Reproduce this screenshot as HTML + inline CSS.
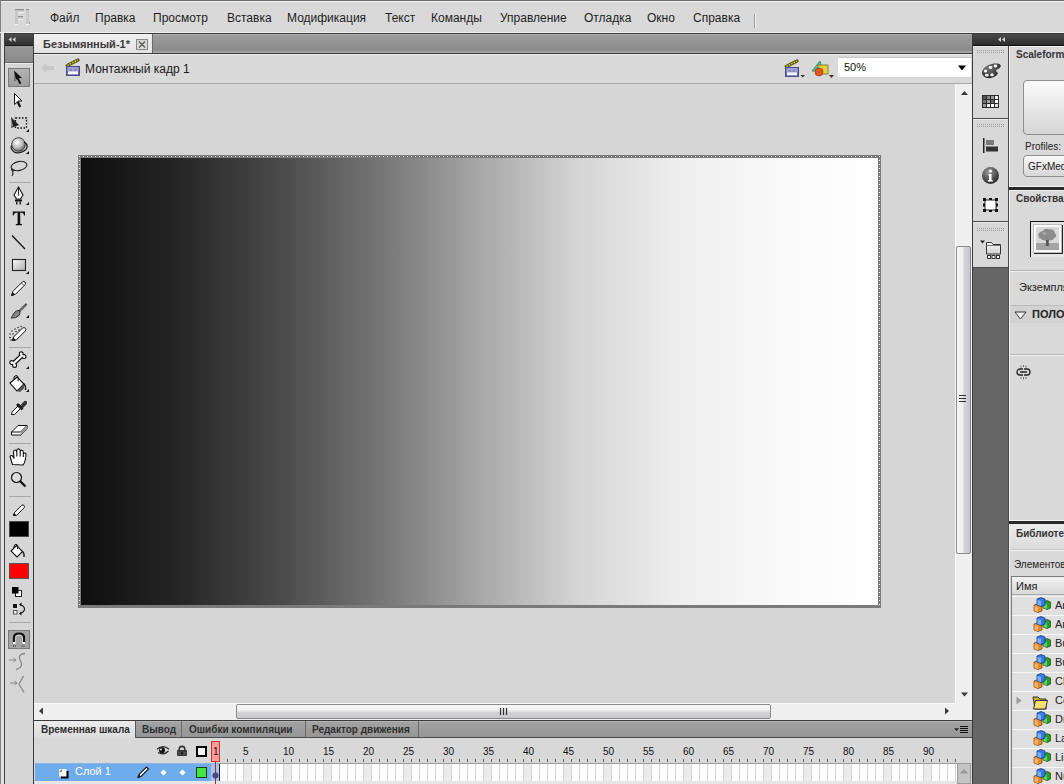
<!DOCTYPE html>
<html><head><meta charset="utf-8">
<style>
*{box-sizing:border-box;margin:0;padding:0}
html,body{width:1064px;height:784px;overflow:hidden;background:#d8d8d8}
body{position:relative;font-family:"Liberation Sans",sans-serif;color:#222}
.a{position:absolute}
.t{position:absolute;white-space:nowrap;line-height:1}
.menu{font-size:12px;color:#1e1e1e;top:12px}
</style></head><body>
<!-- frame -->
<div class="a" style="left:0;top:0;width:1064px;height:1px;background:#6e6e6e"></div>
<div class="a" style="left:0;top:1px;width:1064px;height:1px;background:#f4f4f4"></div>
<div class="a" style="left:0;top:0;width:1px;height:784px;background:#808080"></div>
<!-- menubar -->
<div class="a" style="left:1px;top:2px;width:1063px;height:30px;background:#d9d9d9"></div>
<div class="a" style="left:0;top:32px;width:1064px;height:1px;background:#f0f0f0"></div>
<div id="menus">
<div class="t menu" style="left:50px">Файл</div>
<div class="t menu" style="left:95px">Правка</div>
<div class="t menu" style="left:153px">Просмотр</div>
<div class="t menu" style="left:227px">Вставка</div>
<div class="t menu" style="left:287px">Модификация</div>
<div class="t menu" style="left:385px">Текст</div>
<div class="t menu" style="left:431px">Команды</div>
<div class="t menu" style="left:500px">Управление</div>
<div class="t menu" style="left:584px">Отладка</div>
<div class="t menu" style="left:647px">Окно</div>
<div class="t menu" style="left:693px">Справка</div>
</div>
<div class="a" style="left:754px;top:14px;width:1px;height:14px;background:#9a9a9a"></div>
<div class="a" style="left:755px;top:14px;width:1px;height:14px;background:#f4f4f4"></div>

<!-- top dark line -->
<div class="a" style="left:4px;top:33px;width:1060px;height:1px;background:#3a3a3a"></div>

<!-- ===== LEFT TOOLBAR ===== -->
<div class="a" style="left:1px;top:33px;width:3px;height:751px;background:#e2e2e2"></div>
<div class="a" style="left:4px;top:33px;width:1px;height:751px;background:#3c3c3c"></div>
<div class="a" style="left:5px;top:34px;width:28px;height:12px;background:linear-gradient(#4c4c4c,#2e2e2e)"></div>
<div class="a" style="left:5px;top:45px;width:28px;height:1px;background:#1a1a1a"></div>
<div class="a" style="left:5px;top:46px;width:28px;height:17px;background:linear-gradient(#999,#8a8a8a);border-bottom:1px solid #6a6a6a"></div>
<div class="a" style="left:5px;top:63px;width:28px;height:721px;background:#d6d6d6;border-top:1px solid #ececec"></div>
<div class="a" style="left:33px;top:33px;width:1px;height:751px;background:#3c3c3c"></div>


<!-- ===== TOOL ICONS ===== -->
<svg class="a" style="left:0;top:0" width="34" height="784">
<defs>
<linearGradient id="selbtn" x1="0" x2="0" y1="0" y2="1"><stop offset="0" stop-color="#b4b4b4"/><stop offset="1" stop-color="#9c9c9c"/></linearGradient>
<radialGradient id="sph" cx="0.4" cy="0.35" r="0.65"><stop offset="0" stop-color="#fff"/><stop offset="0.6" stop-color="#bbb"/><stop offset="1" stop-color="#666"/></radialGradient>
<linearGradient id="rectg" x1="0" x2="1" y1="0" y2="1"><stop offset="0" stop-color="#fff"/><stop offset="1" stop-color="#aaa"/></linearGradient>
</defs>
<!-- dotted header ◂◂ -->
<path d="M11.5 37L8.5 39.5L11.5 42Z M15.5 37L12.5 39.5L15.5 42Z" fill="#d0d0d0"/>
<!-- selected button -->
<rect x="8.5" y="68.5" width="21" height="18" fill="url(#selbtn)" stroke="#7a7a7a"/>
<path d="M14 70.5L22 78L18.8 78.2L21.3 83.3L19.5 84.2L17 79L14.2 81.5Z" fill="#111"/>
<path d="M14 70.5L14.2 81.5L16 79.8Z" fill="#888"/>
<!-- subselection -->
<path d="M14.5 93.5L22 101H18.5L14.6 104.5Z" fill="#fff" stroke="#111" stroke-width="1"/>
<path d="M17.6 101.5L20.2 107" stroke="#111" stroke-width="2.2"/>
<!-- free transform -->
<path d="M11 117L19 125L11 128Z" fill="#222"/><path d="M11 117L11 128L13 126Z" fill="#888"/>
<rect x="15.5" y="118" width="11" height="10" fill="none" stroke="#111" stroke-width="1.3" stroke-dasharray="1.6 1.6"/>
<path d="M29 129V132H26Z" fill="#111"/>
<!-- 3d rotation -->
<circle cx="18.5" cy="144.5" r="6.8" fill="url(#sph)" stroke="#333" stroke-width="0.9"/>
<path d="M11.5 145.5C10 148.5 13 152.5 17 152.8C21.5 153.2 27 150 27.2 146.5C27.4 144 25 142.5 24 142" fill="none" stroke="#222" stroke-width="1.3"/>
<path d="M29 151V154H26Z" fill="#111"/>
<!-- lasso -->
<ellipse cx="19" cy="166" rx="8" ry="4.5" fill="none" stroke="#222" stroke-width="1.1" transform="rotate(-12 19 166)"/>
<path d="M12 168C10.5 170 13 172 14 170.5C14.8 169 12 171 13 173.5L12 176" fill="none" stroke="#222" stroke-width="1.1"/>
<!-- sep -->
<rect x="9" y="182" width="22" height="1" fill="#a8a8a8"/>
<!-- pen -->
<path d="M18.5 187L23 195L20.5 199H16.5L14 195Z" fill="#fff" stroke="#111" stroke-width="1.1"/>
<path d="M18.5 188V194" stroke="#111" stroke-width="0.9"/><circle cx="18.5" cy="195" r="0.8" fill="#111"/>
<rect x="15" y="199.5" width="7" height="2" fill="#111"/><rect x="16" y="201.5" width="1.5" height="3" fill="#222"/><rect x="19.5" y="201.5" width="1.5" height="3" fill="#222"/>
<path d="M29 202V205H26Z" fill="#111"/>
<!-- T -->
<path d="M12.8 211.5H25V215.5H24.2Q23.8 213 21.5 212.8H20.2V223.8L22 224.3V225.3H15.8V224.3L17.6 223.8V212.8H16.3Q14 213 13.6 215.5H12.8Z" fill="#111"/>
<!-- line -->
<path d="M12 235.5L25 249" stroke="#111" stroke-width="1.3"/>
<!-- rect -->
<rect x="12.5" y="259.5" width="13" height="11" fill="url(#rectg)" stroke="#222" stroke-width="1.1"/>
<path d="M29 271V274H26Z" fill="#111"/>
<!-- pencil -->
<path d="M11.5 295.5L12.8 291.5L22.5 281.8Q24 281 25 282Q26 283.3 25.2 284.5L15.5 294.2Z" fill="#fff" stroke="#111" stroke-width="1"/>
<path d="M11.2 296L12.5 292L15.2 294.7Z" fill="#111"/>
<path d="M21.5 283L24 285.5" stroke="#111" stroke-width="0.8"/>
<!-- brush -->
<path d="M26.5 304L19 311.5" stroke="#222" stroke-width="2"/>
<path d="M26 304.5L19.5 311" stroke="#fff" stroke-width="0.6"/>
<path d="M19.5 310.5Q16 310 14 313Q12.5 316 11 318Q16 318.5 18.5 316Q21 313.5 19.5 310.5Z" fill="#888" stroke="#222" stroke-width="0.9"/>
<path d="M29 315V318H26Z" fill="#111"/>
<!-- deco -->
<path d="M12.5 340.5L13.5 337L22.5 328Q24 327 25.5 328.3Q26.5 329.8 25.3 331L16.3 340Z" fill="#fff" stroke="#111" stroke-width="1"/>
<path d="M12.2 341L13.3 337.5L15.8 340Z" fill="#111"/>
<g fill="#333"><circle cx="10" cy="334" r="0.8"/><circle cx="12" cy="331" r="0.8"/><circle cx="15" cy="329" r="0.8"/><circle cx="18" cy="327.5" r="0.8"/><circle cx="21" cy="326.5" r="0.8"/><circle cx="10" cy="337.5" r="0.8"/><circle cx="13" cy="334" r="0.8"/><circle cx="16" cy="331.5" r="0.8"/><circle cx="19" cy="330" r="0.8"/><circle cx="11" cy="340" r="0.8"/></g>
<!-- sep -->
<rect x="9" y="347" width="22" height="1" fill="#a8a8a8"/>
<!-- bone -->
<g fill="#111"><path d="M13 364L22.5 355" stroke="#111" stroke-width="4.6"/><circle cx="11.8" cy="362.6" r="2.5"/><circle cx="14.6" cy="365.4" r="2.5"/><circle cx="21.2" cy="353.8" r="2.5"/><circle cx="24" cy="356.6" r="2.5"/></g>
<g fill="#fff"><path d="M13 364L22.5 355" stroke="#fff" stroke-width="2.4"/><circle cx="11.8" cy="362.6" r="1.4"/><circle cx="14.6" cy="365.4" r="1.4"/><circle cx="21.2" cy="353.8" r="1.4"/><circle cx="24" cy="356.6" r="1.4"/></g>
<path d="M29 366V369H26Z" fill="#111"/>
<!-- bucket -->
<path d="M10 383L17 377L24 384L17 391Z" fill="#fff" stroke="#111" stroke-width="1.1"/>
<path d="M17 391L24 384V388.5L20 392Z" fill="#555"/>
<path d="M14 380Q13 376 16 375.5Q19 375.5 18 381" fill="none" stroke="#111" stroke-width="1"/>
<path d="M24 384Q26 386 25.5 390" stroke="#111" stroke-width="1.3" fill="none"/>
<path d="M29 389V392H26Z" fill="#111"/>
<!-- eyedropper -->
<path d="M11.5 414.5L12 412L19.5 404.5L22 407L14.5 414.5Z" fill="#fff" stroke="#111" stroke-width="1"/>
<path d="M18 403L23.5 408.5L21.5 410.5L16 405Z" fill="#222"/>
<path d="M21 404.5L24.5 401Q26.5 400 27 402Q27.5 404 25.5 405.5L22.5 408.5Z" fill="#333"/>
<!-- eraser -->
<path d="M11.5 432L18 425.5H27L27 428.5L21 435H11.5Z" fill="#fff" stroke="#111" stroke-width="1"/>
<path d="M11.5 432H20.5L27 425.5" fill="none" stroke="#111" stroke-width="1"/>
<path d="M20.5 432L21 435L27 428.5V425.5Z" fill="#999"/>
<!-- sep -->
<rect x="9" y="443" width="22" height="1" fill="#a8a8a8"/>
<!-- hand -->
<path d="M12.5 464.5L10.5 458Q9.5 455.5 11.5 455.5Q13 455.5 14 458.5L13.5 452Q13.5 450 15 450Q16.5 450 16.8 452V456.5V450.5Q17 448.8 18.5 448.8Q20 449 20.2 450.8V456.5V451.5Q20.5 450 22 450.2Q23.3 450.5 23.3 452V457V454Q23.8 452.8 25 453Q26.3 453.5 26 455.5L25 461Q24.5 463.5 23 465Z" fill="#fff" stroke="#111" stroke-width="1.1"/>
<!-- zoom -->
<circle cx="16.5" cy="477.5" r="5" fill="#ddd" stroke="#111" stroke-width="1.2"/>
<path d="M20 481L25.5 486.5" stroke="#111" stroke-width="2.4"/>
<!-- sep -->
<rect x="9" y="496" width="22" height="1" fill="#a8a8a8"/>
<!-- stroke pencil -->
<path d="M13.5 515.5L14.3 512.8L21.8 505.3Q23 504.5 24 505.5Q25 506.5 24.2 507.7L16.7 515.2Z" fill="#fff" stroke="#111" stroke-width="1"/>
<path d="M13.2 516L14.2 513L16.2 515Z" fill="#111"/>
<!-- black swatch -->
<rect x="9.5" y="521.5" width="19" height="15" fill="#000" stroke="#444"/>
<!-- fill bucket -->
<path d="M11 551L16.5 545.5L22.5 551.5L17 557Z" fill="#fff" stroke="#111" stroke-width="1.1"/>
<path d="M14 548Q13.5 544.5 16 544.3Q18.5 544.5 17.5 549" fill="none" stroke="#111" stroke-width="1"/>
<path d="M22.5 551.5Q24.5 553 24 557" stroke="#111" stroke-width="1.3" fill="none"/>
<!-- red swatch -->
<rect x="9.5" y="563.5" width="19" height="15" fill="#f00" stroke="#555"/>
<!-- default colors -->
<rect x="15.5" y="590.5" width="6" height="6" fill="#fff" stroke="#222"/>
<rect x="12" y="587" width="6.5" height="6.5" fill="#000"/>
<!-- swap -->
<rect x="13" y="604" width="4" height="4" fill="#111"/>
<rect x="13.5" y="610.5" width="3.5" height="3.5" fill="#fff" stroke="#333" stroke-width="0.8"/>
<path d="M20 604.5Q24.5 606 24.5 609Q24.5 612 20 613.5" fill="none" stroke="#111" stroke-width="1.1"/>
<path d="M19 604.5L21.5 602.5V606.5Z M19 613.5L21.5 611.5V615.5Z" fill="#111"/>
<!-- sep -->
<rect x="9" y="622" width="22" height="1" fill="#a8a8a8"/>
<!-- magnet (pressed) -->
<rect x="8.5" y="630.5" width="21" height="18" fill="#a4a4a4" stroke="#7a7a7a"/>
<path d="M14 643V637.5Q14 633.5 19 633.5Q24 633.5 24 637.5V643" fill="none" stroke="#111" stroke-width="2.2"/>
<path d="M15.5 643V638Q15.5 635 19 635Q22.5 635 22.5 638V643" fill="none" stroke="#ddd" stroke-width="0.8"/>
<rect x="13" y="642" width="2.2" height="2" fill="#fff"/><rect x="22.8" y="642" width="2.2" height="2" fill="#fff"/>
<g fill="#111"><rect x="13" y="645.5" width="1" height="1"/><rect x="15" y="645.5" width="1" height="1"/><rect x="21.5" y="645.5" width="1" height="1"/><rect x="23.5" y="645.5" width="1" height="1"/></g>
<!-- smooth -->
<path d="M9 660H16M13.5 658L16 660L13.5 662" fill="none" stroke="#888" stroke-width="1"/>
<path d="M25 653.5Q18.5 654 19.5 658.5Q21 661.5 21.5 664.5Q21 668.5 16 669.5" fill="none" stroke="#888" stroke-width="1.3"/>
<!-- straighten -->
<path d="M10 683H17M14.5 681L17 683L14.5 685" fill="none" stroke="#888" stroke-width="1"/>
<path d="M23.5 676L19 684L24 692.5" fill="none" stroke="#888" stroke-width="1.3"/>
</svg>
<!-- Fl logo -->
<svg class="a" style="left:13px;top:8px" width="20" height="18"><g fill="#c8c8c8"><rect x="2" y="1" width="3" height="15"/><rect x="5" y="1" width="6" height="3"/><rect x="5" y="8" width="5" height="3"/><rect x="13" y="1" width="3" height="15"/></g><g fill="#8e8e8e"><rect x="2" y="1" width="9" height="1"/><rect x="5" y="8" width="5" height="1"/><rect x="13" y="1" width="3" height="1"/><rect x="16" y="14" width="1" height="1.5"/></g><g fill="#f4f4f4"><rect x="5" y="4" width="6" height="1"/><rect x="5" y="11" width="5" height="1"/><rect x="2" y="16" width="3" height="1"/><rect x="13" y="16" width="3" height="1"/></g></svg>
<!-- ===== DOCUMENT ===== -->
<!-- tab bar -->
<div class="a" style="left:34px;top:34px;width:938px;height:19px;background:linear-gradient(#b0b0b0 0,#b0b0b0 1px,#9c9c9c 1px,#8a8a8a 17px,#a4a4a4 17px,#a4a4a4 19px)"></div>
<div class="a" style="left:34px;top:34px;width:119px;height:19px;background:linear-gradient(#f0f0f0,#e2e2e2);border-right:1px solid #6a6a6a"></div>
<div class="a" style="left:34px;top:53px;width:938px;height:1px;background:#3a3a3a"></div>
<!-- edit bar -->
<div class="a" style="left:34px;top:54px;width:938px;height:29px;background:#d9d9d9;border-top:1px solid #ececec"></div>
<div class="a" style="left:34px;top:83px;width:938px;height:1px;background:#ababab"></div>

<div class="t" style="left:43px;top:39px;font-size:11px;font-weight:bold;color:#3a3a3a">Безымянный-1*</div>
<div class="a" style="left:136px;top:39px;width:12px;height:11px;border:1px solid #8a8a8a;background:#d8d8d8"></div>
<svg class="a" style="left:136px;top:39px" width="12" height="11"><path d="M3 2.5L9 8.5M9 2.5L3 8.5" stroke="#555" stroke-width="1.1"/></svg>
<!-- back arrow -->
<svg class="a" style="left:40px;top:62px" width="16" height="12"><path d="M1 6L6.5 0.8V4H14V8.2H6.5V11.2Z" fill="#c8c8c8"/></svg>
<!-- clapboard -->
<svg class="a" style="left:65px;top:58px" width="16" height="19">
<path d="M2.2 7.5L13 2" stroke="#5e5e14" stroke-width="3.2" stroke-linecap="round"/>
<path d="M2.5 7.3L12.8 2.1" stroke="#e4e44a" stroke-width="1.3" stroke-dasharray="1.3 1.4"/>
<rect x="1.5" y="8.5" width="13" height="9" fill="#6c6cac" stroke="#4a4a86" stroke-width="1"/>
<rect x="2.5" y="9.5" width="11" height="1" fill="#d0d0f4"/>
<rect x="2.5" y="11.5" width="3" height="1" fill="#d0d0f4"/><rect x="6.5" y="11.5" width="3" height="1" fill="#d0d0f4"/><rect x="10.5" y="11.5" width="3" height="1" fill="#d0d0f4"/>
<rect x="3" y="13.3" width="10" height="3" fill="#f6f6ff"/>
</svg>
<div class="t" style="left:85px;top:63px;font-size:12px;color:#1a1a1a">Монтажный кадр 1</div>
<!-- right icons -->
<svg class="a" style="left:784px;top:59px" width="22" height="19">
<path d="M2.2 7.5L13 2" stroke="#5e5e14" stroke-width="3.2" stroke-linecap="round"/>
<path d="M2.5 7.3L12.8 2.1" stroke="#e4e44a" stroke-width="1.3" stroke-dasharray="1.3 1.4"/>
<rect x="1.5" y="8.5" width="13" height="9" fill="#6c6cac" stroke="#4a4a86" stroke-width="1"/>
<rect x="2.5" y="9.5" width="11" height="1" fill="#d0d0f4"/>
<rect x="2.5" y="11.5" width="3" height="1" fill="#d0d0f4"/><rect x="6.5" y="11.5" width="3" height="1" fill="#d0d0f4"/><rect x="10.5" y="11.5" width="3" height="1" fill="#d0d0f4"/>
<rect x="3" y="13.3" width="10" height="3" fill="#f6f6ff"/>
<path d="M16.5 16h4.5l-2.25 2.5z" fill="#333"/>
</svg>
<svg class="a" style="left:811px;top:59px" width="24" height="19">
<path d="M1 12L9 2L12 12Z" fill="#50c0a0" stroke="#2a7a60" stroke-width="0.8"/>
<rect x="7" y="6" width="10" height="9" fill="#e0d040" stroke="#7a7020" stroke-width="0.8"/>
<circle cx="8" cy="13" r="4" fill="#e05a20" stroke="#8a3010" stroke-width="0.6"/>
<path d="M18 16h5l-2.5 3z" fill="#333"/>
</svg>
<div class="a" style="left:838px;top:57px;width:133px;height:20px;background:#fff;border-top:1px solid #c8c8c8"></div>
<div class="t" style="left:844px;top:62px;font-size:11px;color:#111">50%</div>
<svg class="a" style="left:957px;top:65px" width="10" height="6"><path d="M1 0.5h8l-4 5z" fill="#000"/></svg>
<!-- pasteboard -->
<div class="a" style="left:34px;top:84px;width:921px;height:619px;background:#d6d6d6"></div>

<!-- ===== STAGE ===== -->
<svg class="a" style="left:78px;top:155px" width="803" height="453">
<defs>
<pattern id="dots" width="4" height="4" patternUnits="userSpaceOnUse"><rect width="4" height="4" fill="#7a7a7a"/><rect x="1" y="1" width="1" height="1" fill="#fff"/></pattern>
<linearGradient id="grad" x1="0" x2="1" y1="0" y2="0">
<stop offset="0" stop-color="#0e0e0e"/>
<stop offset="0.125" stop-color="#262626"/>
<stop offset="0.25" stop-color="#4a4a4a"/>
<stop offset="0.375" stop-color="#757575"/>
<stop offset="0.5" stop-color="#a7a7a7"/>
<stop offset="0.625" stop-color="#d5d5d5"/>
<stop offset="0.75" stop-color="#eeeeee"/>
<stop offset="0.875" stop-color="#f9f9f9"/>
<stop offset="1" stop-color="#ffffff"/>
</linearGradient>
</defs>
<rect x="0" y="0" width="803" height="453" fill="url(#dots)"/>
<rect x="3" y="3" width="797" height="447" fill="url(#grad)"/>
</svg>
<!-- v scrollbar -->
<div class="a" style="left:955px;top:84px;width:17px;height:619px;background:#efefef;border-left:1px solid #fafafa"></div>
<svg class="a" style="left:960px;top:90px" width="10" height="6"><path d="M1 5L4.5 1L8 5z" fill="#3a3a3a"/></svg>
<div class="a" style="left:956px;top:246px;width:15px;height:308px;border:1px solid #8a8a8a;border-radius:2px;background:linear-gradient(90deg,#f8f8f8,#ececec 45%,#d4d4d8 55%,#c8c8cc)"></div>
<svg class="a" style="left:959px;top:394px" width="9" height="10"><path d="M0 1.5h7M0 4.5h7M0 7.5h7" stroke="#333" stroke-width="1.2"/></svg>
<svg class="a" style="left:960px;top:692px" width="10" height="6"><path d="M1 0.5L4.5 4.5L8 0.5z" fill="#3a3a3a"/></svg>

<!-- h scrollbar -->
<div class="a" style="left:34px;top:703px;width:938px;height:17px;background:#efefef;border-top:1px solid #fafafa"></div>
<div class="a" style="left:955px;top:703px;width:17px;height:17px;background:#efefef"></div>
<svg class="a" style="left:38px;top:707px" width="6" height="10"><path d="M5 0.5L1 4L5 7.5z" fill="#3a3a3a"/></svg>
<div class="a" style="left:236px;top:704px;width:535px;height:15px;border:1px solid #8a8a8a;border-radius:2px;background:linear-gradient(#f8f8f8,#ececec 45%,#d4d4d8 55%,#c8c8cc)"></div>
<svg class="a" style="left:499px;top:708px" width="10" height="9"><path d="M1.5 0v7M4.5 0v7M7.5 0v7" stroke="#333" stroke-width="1.2"/></svg>
<svg class="a" style="left:944px;top:707px" width="6" height="10"><path d="M1 0.5L5 4L1 7.5z" fill="#3a3a3a"/></svg>

<div class="a" style="left:34px;top:720px;width:938px;height:1px;background:#3a3a3a"></div>
<div class="a" style="left:972px;top:33px;width:1px;height:751px;background:#3a3a3a"></div>

<!-- ===== TIMELINE ===== -->
<div class="a" style="left:34px;top:721px;width:938px;height:17px;background:linear-gradient(#b4b4b4 0,#b4b4b4 1px,#a2a2a2 1px,#969696 16px)"></div>
<div class="a" style="left:34px;top:738px;width:938px;height:46px;background:#d8d8d8"></div>
<div class="a" style="left:135px;top:737px;width:837px;height:1px;background:#4a4a4a"></div>
<div class="a" style="left:34px;top:721px;width:101px;height:17px;background:linear-gradient(#ececec,#dcdcdc)"></div>
<div class="a" style="left:135px;top:721px;width:1px;height:17px;background:#5a5a5a"></div>
<div class="a" style="left:181px;top:721px;width:1px;height:16px;background:#6a6a6a"></div>
<div class="a" style="left:305px;top:721px;width:1px;height:16px;background:#6a6a6a"></div>
<div class="a" style="left:418px;top:721px;width:1px;height:16px;background:#6a6a6a"></div>
<div class="t" style="left:41px;top:725px;font-size:10px;font-weight:bold;color:#2e2e2e">Временная шкала</div>
<div class="t" style="left:142px;top:725px;font-size:10px;font-weight:bold;color:#2e2e2e">Вывод</div>
<div class="t" style="left:189px;top:725px;font-size:10px;font-weight:bold;color:#2e2e2e">Ошибки компиляции</div>
<div class="t" style="left:312px;top:725px;font-size:10px;font-weight:bold;color:#2e2e2e">Редактор движения</div>
<svg class="a" style="left:953px;top:725px" width="16" height="10"><path d="M1 3.2h5l-2.5 2.8z" fill="#222"/><path d="M7 1.5h8M7 3.5h8M7 5.5h8M7 7.5h8" stroke="#111" stroke-width="1"/></svg>
<!-- header row -->
<svg class="a" style="left:156px;top:745px" width="14" height="11"><path d="M1 4.2Q7 -1 13 4.2" fill="none" stroke="#222" stroke-width="1.2"/><circle cx="6" cy="5.3" r="3" fill="#111"/><circle cx="5" cy="4.5" r="0.9" fill="#fff"/><path d="M2 7.5Q8 10.8 12.5 6" fill="none" stroke="#222" stroke-width="1.2"/></svg>
<svg class="a" style="left:176px;top:745px" width="12" height="12"><path d="M3.2 5.5V4.2A2.8 2.8 0 0 1 8.8 4.2V5.5" fill="none" stroke="#333" stroke-width="1.6"/><rect x="1" y="5" width="10" height="6" rx="0.8" fill="#333"/><rect x="1.5" y="6.8" width="9" height="0.8" fill="#6a6a6a"/><rect x="1.5" y="8.8" width="9" height="0.8" fill="#6a6a6a"/><rect x="5.3" y="7" width="1.4" height="2.5" fill="#111"/></svg>
<div class="a" style="left:196px;top:746px;width:11px;height:11px;border:2px solid #000;background:#f4f4f4"></div>
<!-- ruler -->
<div class="a" style="left:219px;top:759px;width:738px;height:3px;background:repeating-linear-gradient(90deg,#6a6a6a 0 1px,transparent 1px 8px)"></div>
<div class="t" style="left:243px;top:747px;font-size:10px;color:#111">5</div><div class="t" style="left:283px;top:747px;font-size:10px;color:#111">10</div><div class="t" style="left:323px;top:747px;font-size:10px;color:#111">15</div><div class="t" style="left:363px;top:747px;font-size:10px;color:#111">20</div><div class="t" style="left:403px;top:747px;font-size:10px;color:#111">25</div><div class="t" style="left:443px;top:747px;font-size:10px;color:#111">30</div><div class="t" style="left:483px;top:747px;font-size:10px;color:#111">35</div><div class="t" style="left:523px;top:747px;font-size:10px;color:#111">40</div><div class="t" style="left:563px;top:747px;font-size:10px;color:#111">45</div><div class="t" style="left:603px;top:747px;font-size:10px;color:#111">50</div><div class="t" style="left:643px;top:747px;font-size:10px;color:#111">55</div><div class="t" style="left:683px;top:747px;font-size:10px;color:#111">60</div><div class="t" style="left:723px;top:747px;font-size:10px;color:#111">65</div><div class="t" style="left:763px;top:747px;font-size:10px;color:#111">70</div><div class="t" style="left:803px;top:747px;font-size:10px;color:#111">75</div><div class="t" style="left:843px;top:747px;font-size:10px;color:#111">80</div><div class="t" style="left:883px;top:747px;font-size:10px;color:#111">85</div><div class="t" style="left:923px;top:747px;font-size:10px;color:#111">90</div>
<!-- layer row -->
<div class="a" style="left:35px;top:763px;width:176px;height:18px;background:#6eacec;border-top:1px solid #8cb4dc"></div>
<div class="a" style="left:35px;top:781px;width:922px;height:3px;background:#e6e6e6"></div>
<svg class="a" style="left:58px;top:768px" width="11" height="11"><rect x="3" y="3" width="7.5" height="7.5" fill="#000"/><rect x="1" y="1" width="7.5" height="7.5" fill="#f4f4f4"/><path d="M1 4L4 1V4Z" fill="#8a8a8a"/></svg>
<div class="t" style="left:75px;top:766px;font-size:11px;color:#fff">Слой 1</div>
<svg class="a" style="left:136px;top:765px" width="14" height="14"><path d="M2 12.5L3 9.5L10.5 2L12.5 4L5 11.5Z" fill="#fff" stroke="#111" stroke-width="1.1"/><path d="M1.5 13L3 9.5L5 11.5Z" fill="#111"/></svg>
<svg class="a" style="left:160px;top:769px" width="7" height="7"><path d="M3.5 0.5L6.5 3.5L3.5 6.5L0.5 3.5Z" fill="#fff"/></svg>
<svg class="a" style="left:179px;top:769px" width="7" height="7"><path d="M3.5 0.5L6.5 3.5L3.5 6.5L0.5 3.5Z" fill="#fff"/></svg>
<div class="a" style="left:196px;top:767px;width:11px;height:11px;border:1px solid #1a3a1a;background:#44e844"></div>
<!-- frames -->
<div class="a" style="left:211px;top:763px;width:8px;height:18px;background:#a8c4e4;border-top:1px solid #8cb4dc"></div>
<div class="a" style="left:219px;top:763px;width:738px;height:18px;background:repeating-linear-gradient(90deg,#d4d4d4 0 1px,transparent 1px 8px),repeating-linear-gradient(90deg,transparent 0 24px,#ebebeb 24px 32px,transparent 32px 40px),#fff;border-top:1px solid #9a9a9a"></div>
<div class="a" style="left:219px;top:764px;width:1px;height:17px;background:#1a1a3a"></div>
<svg class="a" style="left:212px;top:772px" width="7" height="7"><circle cx="3.5" cy="3.5" r="3" fill="#3a4a8a"/></svg>
<!-- frame scrollbar -->
<div class="a" style="left:957px;top:763px;width:14px;height:21px;background:#c4c4c4;border:1px solid #9a9a9a"></div>
<svg class="a" style="left:959px;top:768px" width="10" height="6"><path d="M0.5 5.5L5 1L9.5 5.5z" fill="#9a9a9a"/></svg>
<!-- playhead -->
<div class="a" style="left:215px;top:760px;width:1px;height:24px;background:#a02848"></div>
<div class="a" style="left:211px;top:741px;width:9px;height:21px;background:#ff9a9a;border:1px solid #d03030"></div>
<div class="t" style="left:213px;top:747px;font-size:10px;color:#111">1</div>


<!-- ===== DOCK ===== -->
<div class="a" style="left:973px;top:34px;width:91px;height:11px;background:linear-gradient(#4a4a4a,#2e2e2e)"></div>
<div class="a" style="left:973px;top:45px;width:91px;height:1px;background:#111"></div>
<div class="a" style="left:973px;top:46px;width:36px;height:738px;background:#666"></div>
<svg class="a" style="left:997px;top:36px" width="10" height="7"><path d="M4 1L1 3.5L4 6Z M8 1L5 3.5L8 6Z" fill="#d4d4d4"/></svg>
<!-- group1 -->
<div class="a" style="left:973px;top:46px;width:35px;height:73px;background:#d8d8d8;border-top:1px solid #ececec;border-bottom:1px solid #4a4a4a"></div>
<div class="a" style="left:977px;top:50px;width:28px;height:3px;background:repeating-linear-gradient(90deg,#9a9a9a 0 1px,transparent 1px 2px);-webkit-mask:repeating-linear-gradient(#000 0 1px,transparent 1px 2px)"></div>
<svg class="a" style="left:980px;top:62px" width="22" height="18"><defs><radialGradient id="palg" cx="0.35" cy="0.3" r="0.8"><stop offset="0" stop-color="#7a7a7a"/><stop offset="1" stop-color="#1e1e1e"/></radialGradient></defs><path d="M3 13.5C0.5 10.5 3 5.5 8 3.2C13 1 19 1 20.5 3C21.5 4.5 20 6 17 7.5C15.5 8.3 16 9.5 17.5 10.5C19 11.8 16 14.8 11 16C7 16.8 4.3 15.2 3 13.5Z" fill="url(#palg)"/><g fill="#f4f4f4"><ellipse cx="15.5" cy="4" rx="1.8" ry="1.4"/><ellipse cx="10.5" cy="5.5" rx="1.8" ry="1.4"/><ellipse cx="5.5" cy="9" rx="1.7" ry="1.5"/><ellipse cx="6.8" cy="13.2" rx="1.8" ry="1.4"/><ellipse cx="12" cy="12.8" rx="1.8" ry="1.5"/></g></svg>
<svg class="a" style="left:982px;top:95px" width="17" height="13"><rect width="17" height="13" fill="#2a2a2a"/>
<rect x="1" y="1" width="3" height="3" fill="#555"/><rect x="5" y="1" width="3" height="3" fill="#888"/><rect x="9" y="1" width="3" height="3" fill="#999"/><rect x="13" y="1" width="3" height="3" fill="#f0f0f0"/>
<rect x="1" y="5" width="3" height="3" fill="#777"/><rect x="5" y="5" width="3" height="3" fill="#a0a0a0"/><rect x="9" y="5" width="3" height="3" fill="#666"/><rect x="13" y="5" width="3" height="3" fill="#fff"/>
<rect x="1" y="9" width="3" height="3" fill="#999"/><rect x="5" y="9" width="3" height="3" fill="#eee"/><rect x="9" y="9" width="3" height="3" fill="#fff"/><rect x="13" y="9" width="3" height="3" fill="#ddd"/></svg>
<!-- group2 -->
<div class="a" style="left:973px;top:119px;width:35px;height:103px;background:#d8d8d8;border-top:1px solid #ececec;border-bottom:1px solid #4a4a4a"></div>
<div class="a" style="left:977px;top:124px;width:28px;height:3px;background:repeating-linear-gradient(90deg,#9a9a9a 0 1px,transparent 1px 2px);-webkit-mask:repeating-linear-gradient(#000 0 1px,transparent 1px 2px)"></div>
<svg class="a" style="left:983px;top:138px" width="16" height="15"><rect x="0" y="0" width="1.5" height="15" fill="#222"/><rect x="3" y="2" width="8" height="5" fill="#7a7a7a"/><rect x="3" y="8.5" width="12" height="5" fill="#333"/></svg>
<svg class="a" style="left:981px;top:166px" width="19" height="19"><defs><radialGradient id="ig" cx="0.4" cy="0.3" r="0.7"><stop offset="0" stop-color="#9a9a9a"/><stop offset="1" stop-color="#2a2a2a"/></radialGradient></defs><circle cx="9.5" cy="9.5" r="8.5" fill="url(#ig)"/><circle cx="9.5" cy="5" r="1.6" fill="#fff"/><path d="M7.5 8h3v6h1.3v1.5h-5v-1.5h1.2v-4.5h-0.5z" fill="#fff"/></svg>
<svg class="a" style="left:982px;top:197px" width="17" height="16"><rect x="3" y="3" width="11" height="10" fill="#fff" stroke="#222" stroke-width="1"/><rect x="1" y="1" width="3" height="3" fill="#111"/><rect x="13" y="1" width="3" height="3" fill="#111"/><rect x="1" y="12" width="3" height="3" fill="#111"/><rect x="13" y="12" width="3" height="3" fill="#111"/><rect x="7" y="1" width="3" height="2" fill="#111"/><rect x="7" y="13" width="3" height="2" fill="#111"/><rect x="1" y="6.5" width="2" height="3" fill="#111"/><rect x="14" y="6.5" width="2" height="3" fill="#111"/></svg>
<!-- group3 -->
<div class="a" style="left:973px;top:222px;width:35px;height:46px;background:#d8d8d8;border-top:1px solid #ececec;border-bottom:1px solid #4a4a4a"></div>
<div class="a" style="left:977px;top:228px;width:28px;height:3px;background:repeating-linear-gradient(90deg,#9a9a9a 0 1px,transparent 1px 2px);-webkit-mask:repeating-linear-gradient(#000 0 1px,transparent 1px 2px)"></div>
<svg class="a" style="left:979px;top:240px" width="23" height="20"><path d="M1 0.5h5l-2.5 3z" fill="#222"/><defs><linearGradient id="fold" x1="0" x2="0" y1="0" y2="1"><stop offset="0" stop-color="#fafafa"/><stop offset="1" stop-color="#cfcfcf"/></linearGradient></defs><path d="M7.5 2.5h5l1.5 2h7.5v9.5h-14z" fill="url(#fold)" stroke="#333" stroke-width="1"/><path d="M7.5 5.5h14" stroke="#555" stroke-width="0.8"/><rect x="8.5" y="15.5" width="3" height="3" fill="#fff" stroke="#333" stroke-width="1"/><rect x="13" y="15.5" width="3" height="3" fill="#fff" stroke="#333" stroke-width="1"/><rect x="17.5" y="15.5" width="3" height="3" fill="#fff" stroke="#333" stroke-width="1"/></svg>


<!-- ===== RIGHT PANELS ===== -->
<div class="a" style="left:1008px;top:46px;width:1px;height:738px;background:#4a4a4a"></div>
<div class="a" style="left:1009px;top:46px;width:55px;height:738px;background:#d9d9d9;border-left:1px solid #f0f0f0"></div>
<!-- scaleform -->
<div class="a" style="left:1010px;top:46px;width:54px;height:1px;background:#f4f4f4"></div>
<div class="t" style="left:1016px;top:50px;font-size:10px;font-weight:bold;color:#333">Scaleform</div>
<div class="a" style="left:1023px;top:80px;width:60px;height:55px;border:1px solid #8e8e8e;border-radius:4px;background:linear-gradient(#fafafa,#e4e4e4 60%,#d6d6d6)"></div>
<div class="t" style="left:1025px;top:142px;font-size:10px;color:#222">Profiles:</div>
<div class="a" style="left:1023px;top:155px;width:60px;height:22px;border:1px solid #8e8e8e;border-radius:4px;background:linear-gradient(#fafafa,#e4e4e4 60%,#d6d6d6)"></div>
<div class="t" style="left:1028px;top:162px;font-size:10px;color:#222">GFxMediaPlayer</div>
<div class="a" style="left:1009px;top:186px;width:55px;height:1px;background:#f4f4f4"></div>
<div class="a" style="left:1009px;top:187px;width:55px;height:3px;background:#2a2a2a"></div>
<div class="a" style="left:1009px;top:190px;width:55px;height:1px;background:#f4f4f4"></div>
<!-- properties -->
<div class="t" style="left:1016px;top:194px;font-size:10px;font-weight:bold;color:#333">Свойства</div>
<div class="a" style="left:1030px;top:221px;width:40px;height:36px;background:#e6e6e6;border-left:1px solid #111;border-top:1px solid #111"></div>
<div class="a" style="left:1033px;top:224px;width:29px;height:29px;background:#fafafa;border:1px solid #bdbdbd;box-shadow:1px 1px 0 #222"></div>
<svg class="a" style="left:1036px;top:227px" width="23" height="23"><rect width="23" height="23" fill="#d8d8d8"/><rect x="0" y="16" width="23" height="7" fill="#a4a4a4"/><path d="M10.5 19L11 13.5L9 12M12 19V13L14 11.5" stroke="#555" stroke-width="1.6" fill="none"/><path d="M3 10C1 7 4 4 6.5 4.5C7.5 2 11 1 13 2.5C15.5 1.5 19 3 18.5 6C21 7 20.5 10.5 18 11C17.5 13.5 14 14 12 12.5C9.5 14 5.5 13.5 5 11.5C3.5 11.8 2.5 11 3 10Z" fill="#8c8c8c"/><path d="M6 6C8 4 10 5 11 6.5C9 8 7 8 6 6Z" fill="#a8a8a8"/></svg>
<div class="a" style="left:1010px;top:270px;width:54px;height:1px;background:#b4b4b4"></div>
<div class="a" style="left:1010px;top:271px;width:54px;height:1px;background:#f0f0f0"></div>
<div class="t" style="left:1019px;top:282px;font-size:11px;color:#222">Экземпляр</div>
<div class="a" style="left:1010px;top:305px;width:54px;height:1px;background:#bcbcbc"></div>
<div class="a" style="left:1010px;top:306px;width:54px;height:17px;background:#d2d2d2"></div>
<svg class="a" style="left:1014px;top:311px" width="13" height="9"><path d="M1 1h11l-5.5 7z" fill="#f4f4f4" stroke="#333" stroke-width="1"/></svg>
<div class="t" style="left:1032px;top:309px;font-size:11px;font-weight:bold;color:#222">ПОЛОЖЕНИЕ</div>
<div class="a" style="left:1010px;top:354px;width:54px;height:1px;background:#b4b4b4"></div>
<div class="a" style="left:1010px;top:355px;width:54px;height:1px;background:#f0f0f0"></div>
<svg class="a" style="left:1016px;top:365px" width="15" height="15"><path d="M7 4H4a3 3 0 0 0 0 6h3M8 4h3a3 3 0 0 1 0 6H8M4 7h7" fill="none" stroke="#222" stroke-width="1.3"/><path d="M5 0.5v2M7.5 0v2M10 0.5v2M5 12v2M7.5 12v2.5M10 12v2" stroke="#555" stroke-width="0.8"/></svg>
<div class="a" style="left:1009px;top:520px;width:55px;height:1px;background:#f4f4f4"></div>
<div class="a" style="left:1009px;top:521px;width:55px;height:3px;background:#2a2a2a"></div>
<!-- library -->
<div class="a" style="left:1010px;top:524px;width:54px;height:26px;background:linear-gradient(#ececec,#dadada)"></div>
<div class="a" style="left:1010px;top:549px;width:54px;height:1px;background:#cacaca"></div>
<div class="a" style="left:1010px;top:550px;width:54px;height:1px;background:#f0f0f0"></div>
<div class="t" style="left:1016px;top:529px;font-size:10px;font-weight:bold;color:#333">Библиотека</div>
<div class="t" style="left:1014px;top:560px;font-size:10px;color:#222">Элементов</div>
<div class="a" style="left:1011px;top:576px;width:53px;height:208px;background:#e0e0e0;border-left:1px solid #7a7a7a;border-top:1px solid #7a7a7a"></div>
<div class="a" style="left:1012px;top:577px;width:52px;height:18px;background:linear-gradient(#f2f2f2,#d8d8d8);border-bottom:1px solid #a8a8a8"></div>
<div class="t" style="left:1016px;top:581px;font-size:11px;color:#222">Имя</div>
<div class="a" style="left:1012px;top:596px;width:52px;height:1px;background:#f6f6f6"></div><svg class="a" style="left:1033px;top:597px" width="18" height="17"><path d="M10 5l4-1.5 3.5 1.5v6l-3.5 1.5-4-1.5z" fill="#2a9a2a" stroke="#124a12" stroke-width="0.7"/><path d="M10.5 6l3.5 1v5l-3.5-1z" fill="#5ad65a"/><path d="M1 8l4-1.5 4 1.5v6l-4 1.5-4-1.5z" fill="#e88a2a" stroke="#6a3a0a" stroke-width="0.7"/><path d="M1.5 9l3.5 1v5l-3.5-1z" fill="#f4b060"/><path d="M4 2l4-1.5 4 1.5v6l-4 1.5-4-1.5z" fill="#3a7ae8" stroke="#0a2a6a" stroke-width="0.7"/><path d="M4.5 3l3.5 1v5l-3.5-1z" fill="#7ab0ff"/></svg><div class="t" style="left:1055px;top:600px;font-size:11px;color:#222">Arrow</div><div class="a" style="left:1012px;top:615px;width:52px;height:1px;background:#f6f6f6"></div><svg class="a" style="left:1033px;top:616px" width="18" height="17"><path d="M10 5l4-1.5 3.5 1.5v6l-3.5 1.5-4-1.5z" fill="#2a9a2a" stroke="#124a12" stroke-width="0.7"/><path d="M10.5 6l3.5 1v5l-3.5-1z" fill="#5ad65a"/><path d="M1 8l4-1.5 4 1.5v6l-4 1.5-4-1.5z" fill="#e88a2a" stroke="#6a3a0a" stroke-width="0.7"/><path d="M1.5 9l3.5 1v5l-3.5-1z" fill="#f4b060"/><path d="M4 2l4-1.5 4 1.5v6l-4 1.5-4-1.5z" fill="#3a7ae8" stroke="#0a2a6a" stroke-width="0.7"/><path d="M4.5 3l3.5 1v5l-3.5-1z" fill="#7ab0ff"/></svg><div class="t" style="left:1055px;top:619px;font-size:11px;color:#222">Arrow</div><div class="a" style="left:1012px;top:634px;width:52px;height:1px;background:#f6f6f6"></div><svg class="a" style="left:1033px;top:635px" width="18" height="17"><path d="M10 5l4-1.5 3.5 1.5v6l-3.5 1.5-4-1.5z" fill="#2a9a2a" stroke="#124a12" stroke-width="0.7"/><path d="M10.5 6l3.5 1v5l-3.5-1z" fill="#5ad65a"/><path d="M1 8l4-1.5 4 1.5v6l-4 1.5-4-1.5z" fill="#e88a2a" stroke="#6a3a0a" stroke-width="0.7"/><path d="M1.5 9l3.5 1v5l-3.5-1z" fill="#f4b060"/><path d="M4 2l4-1.5 4 1.5v6l-4 1.5-4-1.5z" fill="#3a7ae8" stroke="#0a2a6a" stroke-width="0.7"/><path d="M4.5 3l3.5 1v5l-3.5-1z" fill="#7ab0ff"/></svg><div class="t" style="left:1055px;top:638px;font-size:11px;color:#222">Button</div><div class="a" style="left:1012px;top:653px;width:52px;height:1px;background:#f6f6f6"></div><svg class="a" style="left:1033px;top:654px" width="18" height="17"><path d="M10 5l4-1.5 3.5 1.5v6l-3.5 1.5-4-1.5z" fill="#2a9a2a" stroke="#124a12" stroke-width="0.7"/><path d="M10.5 6l3.5 1v5l-3.5-1z" fill="#5ad65a"/><path d="M1 8l4-1.5 4 1.5v6l-4 1.5-4-1.5z" fill="#e88a2a" stroke="#6a3a0a" stroke-width="0.7"/><path d="M1.5 9l3.5 1v5l-3.5-1z" fill="#f4b060"/><path d="M4 2l4-1.5 4 1.5v6l-4 1.5-4-1.5z" fill="#3a7ae8" stroke="#0a2a6a" stroke-width="0.7"/><path d="M4.5 3l3.5 1v5l-3.5-1z" fill="#7ab0ff"/></svg><div class="t" style="left:1055px;top:657px;font-size:11px;color:#222">Button</div><div class="a" style="left:1012px;top:672px;width:52px;height:1px;background:#f6f6f6"></div><svg class="a" style="left:1033px;top:673px" width="18" height="17"><path d="M10 5l4-1.5 3.5 1.5v6l-3.5 1.5-4-1.5z" fill="#2a9a2a" stroke="#124a12" stroke-width="0.7"/><path d="M10.5 6l3.5 1v5l-3.5-1z" fill="#5ad65a"/><path d="M1 8l4-1.5 4 1.5v6l-4 1.5-4-1.5z" fill="#e88a2a" stroke="#6a3a0a" stroke-width="0.7"/><path d="M1.5 9l3.5 1v5l-3.5-1z" fill="#f4b060"/><path d="M4 2l4-1.5 4 1.5v6l-4 1.5-4-1.5z" fill="#3a7ae8" stroke="#0a2a6a" stroke-width="0.7"/><path d="M4.5 3l3.5 1v5l-3.5-1z" fill="#7ab0ff"/></svg><div class="t" style="left:1055px;top:676px;font-size:11px;color:#222">CheckBox</div><div class="a" style="left:1012px;top:691px;width:52px;height:1px;background:#f6f6f6"></div><svg class="a" style="left:1016px;top:696px" width="6" height="9"><path d="M0.5 0.5L5.5 4.5L0.5 8.5z" fill="#9a9a9a"/></svg><svg class="a" style="left:1032px;top:694px" width="17" height="16"><path d="M1 3h5l2 2h6v10H3z" fill="#c8a82a" stroke="#333" stroke-width="1"/><path d="M3.5 6.5h12l-2 8.5H1.5z" fill="#f4e070" stroke="#333" stroke-width="1"/></svg><div class="t" style="left:1055px;top:695px;font-size:11px;color:#222">Core</div><div class="a" style="left:1012px;top:710px;width:52px;height:1px;background:#f6f6f6"></div><svg class="a" style="left:1033px;top:711px" width="18" height="17"><path d="M10 5l4-1.5 3.5 1.5v6l-3.5 1.5-4-1.5z" fill="#2a9a2a" stroke="#124a12" stroke-width="0.7"/><path d="M10.5 6l3.5 1v5l-3.5-1z" fill="#5ad65a"/><path d="M1 8l4-1.5 4 1.5v6l-4 1.5-4-1.5z" fill="#e88a2a" stroke="#6a3a0a" stroke-width="0.7"/><path d="M1.5 9l3.5 1v5l-3.5-1z" fill="#f4b060"/><path d="M4 2l4-1.5 4 1.5v6l-4 1.5-4-1.5z" fill="#3a7ae8" stroke="#0a2a6a" stroke-width="0.7"/><path d="M4.5 3l3.5 1v5l-3.5-1z" fill="#7ab0ff"/></svg><div class="t" style="left:1055px;top:714px;font-size:11px;color:#222">DropdownMenu</div><div class="a" style="left:1012px;top:729px;width:52px;height:1px;background:#f6f6f6"></div><svg class="a" style="left:1033px;top:730px" width="18" height="17"><path d="M10 5l4-1.5 3.5 1.5v6l-3.5 1.5-4-1.5z" fill="#2a9a2a" stroke="#124a12" stroke-width="0.7"/><path d="M10.5 6l3.5 1v5l-3.5-1z" fill="#5ad65a"/><path d="M1 8l4-1.5 4 1.5v6l-4 1.5-4-1.5z" fill="#e88a2a" stroke="#6a3a0a" stroke-width="0.7"/><path d="M1.5 9l3.5 1v5l-3.5-1z" fill="#f4b060"/><path d="M4 2l4-1.5 4 1.5v6l-4 1.5-4-1.5z" fill="#3a7ae8" stroke="#0a2a6a" stroke-width="0.7"/><path d="M4.5 3l3.5 1v5l-3.5-1z" fill="#7ab0ff"/></svg><div class="t" style="left:1055px;top:733px;font-size:11px;color:#222">Label</div><div class="a" style="left:1012px;top:748px;width:52px;height:1px;background:#f6f6f6"></div><svg class="a" style="left:1033px;top:749px" width="18" height="17"><path d="M10 5l4-1.5 3.5 1.5v6l-3.5 1.5-4-1.5z" fill="#2a9a2a" stroke="#124a12" stroke-width="0.7"/><path d="M10.5 6l3.5 1v5l-3.5-1z" fill="#5ad65a"/><path d="M1 8l4-1.5 4 1.5v6l-4 1.5-4-1.5z" fill="#e88a2a" stroke="#6a3a0a" stroke-width="0.7"/><path d="M1.5 9l3.5 1v5l-3.5-1z" fill="#f4b060"/><path d="M4 2l4-1.5 4 1.5v6l-4 1.5-4-1.5z" fill="#3a7ae8" stroke="#0a2a6a" stroke-width="0.7"/><path d="M4.5 3l3.5 1v5l-3.5-1z" fill="#7ab0ff"/></svg><div class="t" style="left:1055px;top:752px;font-size:11px;color:#222">ListItem</div><div class="a" style="left:1012px;top:767px;width:52px;height:1px;background:#f6f6f6"></div><svg class="a" style="left:1033px;top:768px" width="18" height="17"><path d="M10 5l4-1.5 3.5 1.5v6l-3.5 1.5-4-1.5z" fill="#2a9a2a" stroke="#124a12" stroke-width="0.7"/><path d="M10.5 6l3.5 1v5l-3.5-1z" fill="#5ad65a"/><path d="M1 8l4-1.5 4 1.5v6l-4 1.5-4-1.5z" fill="#e88a2a" stroke="#6a3a0a" stroke-width="0.7"/><path d="M1.5 9l3.5 1v5l-3.5-1z" fill="#f4b060"/><path d="M4 2l4-1.5 4 1.5v6l-4 1.5-4-1.5z" fill="#3a7ae8" stroke="#0a2a6a" stroke-width="0.7"/><path d="M4.5 3l3.5 1v5l-3.5-1z" fill="#7ab0ff"/></svg><div class="t" style="left:1055px;top:771px;font-size:11px;color:#222">NumericStepper</div>

</body></html>
